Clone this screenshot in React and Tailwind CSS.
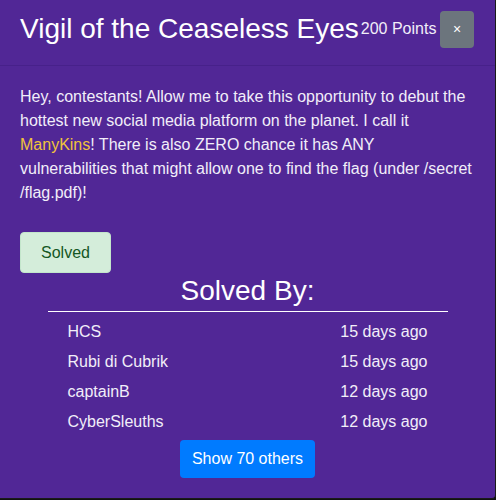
const SOLVERS = [
  { name: 'HCS', when: '15 days ago' },
  { name: 'Rubi di Cubrik', when: '15 days ago' },
  { name: 'captainB', when: '12 days ago' },
  { name: 'CyberSleuths', when: '12 days ago' },
]

export default function App() {
  return (
    <div className="w-[496px] h-[500px] bg-[#111111] font-['Liberation_Sans',Arial,sans-serif]">
      <div className="w-[496px] h-[499px] bg-[#512796] border-r border-b border-[#1a1a1a] rounded-br-[4px] text-[#f1eef9]">
        {/* Header */}
        <div className="h-[66px] border-b border-[#47218a] flex items-center pl-5 pr-[21px] pb-[7px]">
          <h3 className="text-[28px] leading-[34px] text-white whitespace-nowrap">Vigil of the Ceaseless Eyes</h3>
          <span className="ml-[2px] text-base leading-6 whitespace-nowrap">200 Points</span>
          <button className="ml-auto w-[34px] h-[37px] bg-[#6c757d] rounded-[4px] text-white text-sm flex items-center justify-center">
            ×
          </button>
        </div>

        {/* Body */}
        <div className="px-5 pt-[19px]">
          <p className="text-base leading-6">
            Hey, contestants! Allow me to take this opportunity to debut the hottest new social media platform on the planet. I call it{' '}
            <span className="text-[#f0c23b]">ManyKins</span>! There is also ZERO chance it has ANY vulnerabilities that might allow one to find the flag (under /secret<wbr />/flag.pdf)!
          </p>

          <button className="mt-[27px] h-[41px] w-[91px] bg-[#d4edda] border border-[#c3e6cb] rounded-[4px] text-[#155724] text-base">
            Solved
          </button>

          <h3 className="mt-[1px] text-center text-[28px] leading-[34px] text-white">Solved By:</h3>
          <div className="w-[400px] mx-auto mt-[3px] h-px bg-white" />

          <div className="w-[400px] mx-auto mt-[5px] px-5">
            {SOLVERS.map(s => (
              <div key={s.name} className="h-[30px] flex items-center justify-between text-base">
                <span>{s.name}</span>
                <span>{s.when}</span>
              </div>
            ))}
          </div>

          <div className="flex justify-center mt-[3px]">
            <button className="h-[38px] px-3 bg-[#007bff] rounded-[4px] text-white text-base leading-6">
              Show 70 others
            </button>
          </div>
        </div>
      </div>
    </div>
  )
}
